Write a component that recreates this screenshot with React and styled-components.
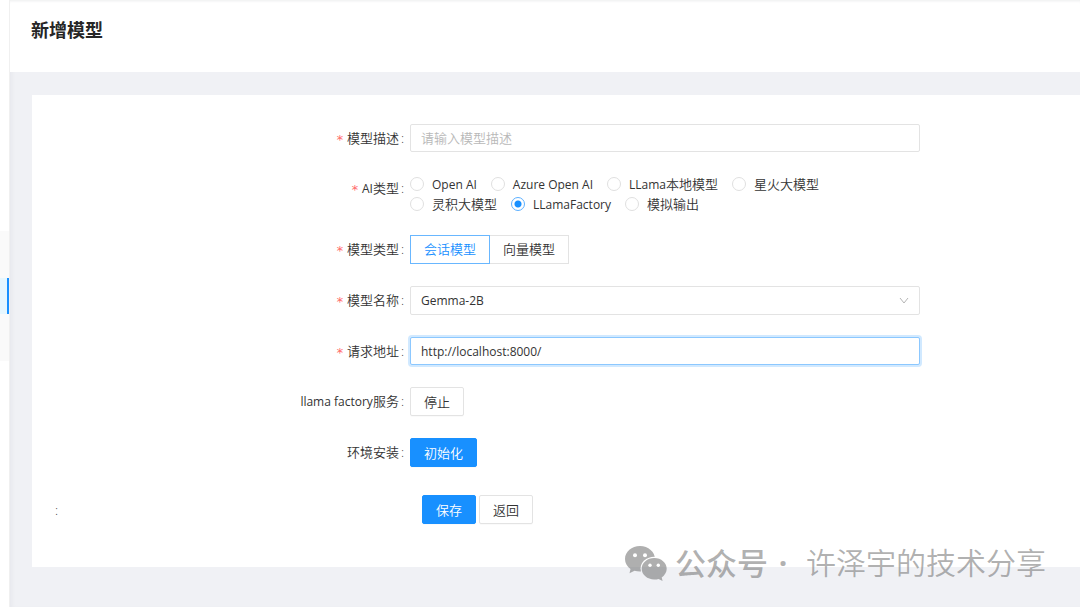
import React, { useState } from 'react'
import styled, { createGlobalStyle, css } from 'styled-components'

const aiTypes = [
  { latin: 'Open AI' },
  { latin: 'Azure Open AI' },
  { latin: 'LLama', text: '本地模型' },
  { text: '星火大模型' },
  { text: '灵积大模型' },
  { latin: 'LLamaFactory' },
  { text: '模拟输出' },
]
const modelTypes = ['会话模型', '向量模型']

const WechatIcon = () => (
  <svg width="42" height="35" viewBox="0 0 42 35" fill="currentColor" aria-hidden="true">
    <mask id="bubbles">
      <rect width="42" height="35" fill="#fff" />
      <ellipse cx="29.3" cy="22.7" rx="13.8" ry="12" fill="#000" />
      <circle cx="10" cy="9.3" r="2" fill="#000" />
      <circle cx="20" cy="9.3" r="2" fill="#000" />
    </mask>
    <mask id="eyes">
      <rect width="42" height="35" fill="#fff" />
      <circle cx="25" cy="19.3" r="1.7" fill="#000" />
      <circle cx="33.3" cy="19.3" r="1.7" fill="#000" />
    </mask>
    <path
      mask="url(#bubbles)"
      d="M15 0C6.700 0 0 5.700 0 13c0 4 2.100 7.500 5.500 10l-1 4.200 5-2.500c1.700.5 3.500.8 5.500.8 8.300 0 15-5.500 15-12.500S23.300 0 15 0z"
    />
    <path
      mask="url(#eyes)"
      d="M29.300 12c-7 0-12.600 4.800-12.600 10.800s5.600 10.700 12.600 10.700c1.500 0 3-.2 4.300-.6l4 2.100-.9-3.600c3-2 5-5.100 5-8.600 0-6-5.500-10.800-12.400-10.800z"
    />
  </svg>
)

const App = () => {
  const [aiType, setAiType] = useState(5)
  const [modelType, setModelType] = useState('会话模型')
  const [desc, setDesc] = useState('')
  const [url, setUrl] = useState('http://localhost:8000/')

  return (
    <>
      <GlobalStyle />
      <Layout>
        <Sider>
          <SubMenu>
            <ActiveItem />
          </SubMenu>
        </Sider>
        <Main>
          <PageHeader>
            <PageTitle>新增模型</PageTitle>
          </PageHeader>
          <Card onSubmit={(e) => e.preventDefault()}>
            <FormItem>
              <Label htmlFor="desc" $required>模型描述</Label>
              <Input id="desc" placeholder="请输入模型描述" value={desc} onChange={(e) => setDesc(e.target.value)} />
            </FormItem>
            <FormItem $tight>
              <Label as="span" id="aiType" $required><Latin>AI</Latin>类型</Label>
              <RadioGroup role="radiogroup" aria-labelledby="aiType">
                {aiTypes.map(({ latin, text }, i) => (
                  <RadioLabel key={i}>
                    <Radio type="radio" name="aiType" checked={aiType === i} onChange={() => setAiType(i)} />
                    <span>{latin && <Latin>{latin}</Latin>}{text}</span>
                  </RadioLabel>
                ))}
              </RadioGroup>
            </FormItem>
            <FormItem>
              <Label as="span" id="modelType" $required>模型类型</Label>
              <ButtonGroup role="radiogroup" aria-labelledby="modelType">
                {modelTypes.map((type) => (
                  <RadioButton key={type}>
                    <HiddenRadio type="radio" name="modelType" checked={modelType === type} onChange={() => setModelType(type)} />
                    {type}
                  </RadioButton>
                ))}
              </ButtonGroup>
            </FormItem>
            <FormItem>
              <Label htmlFor="name" $required>模型名称</Label>
              <SelectWrapper>
                <Select id="name" defaultValue="Gemma-2B">
                  <option>Gemma-2B</option>
                </Select>
                <Arrow viewBox="0 0 10 8" aria-hidden="true">
                  <path d="M1 1l4 5 4-5" fill="none" stroke="currentColor" />
                </Arrow>
              </SelectWrapper>
            </FormItem>
            <FormItem>
              <Label htmlFor="url" $required>请求地址</Label>
              <Input id="url" type="url" $active value={url} onChange={(e) => setUrl(e.target.value)} />
            </FormItem>
            <FormItem>
              <Label as="span"><Latin>llama factory</Latin>服务</Label>
              <Actions>
                <Button type="button">停止</Button>
              </Actions>
            </FormItem>
            <FormItem>
              <Label as="span">环境安装</Label>
              <Actions>
                <Button type="button" $primary>初始化</Button>
              </Actions>
            </FormItem>
            <Footer>
              <Colon>:</Colon>
              <Actions $indent>
                <Button type="submit" $primary>保存</Button>
                <Button type="button">返回</Button>
              </Actions>
            </Footer>
          </Card>
        </Main>
      </Layout>
      <Watermark>
        <WechatIcon />
        <strong>公众号</strong>
        <Dot>·</Dot>
        <span>许泽宇的技术分享</span>
      </Watermark>
    </>
  )
}

export default App

const GlobalStyle = createGlobalStyle`
  * {
    box-sizing: border-box;
  }

  body {
    margin: 0;
    font-family: 'Open Sans', 'Noto Sans CJK SC', sans-serif;
    font-size: 13px;
    font-weight: 350;
    line-height: 20px;
    color: #333;
    background: #f0f2f5;
  }

  input, select, button {
    font: inherit;
    color: inherit;
  }
`
const Layout = styled.div`
  display: flex;
  min-height: 100vh;
`
const Sider = styled.aside`
  flex: none;
  width: 10px;
  padding-top: 231px;
  background: #fff;
  border-right: 1px solid #f0f0f0;
`
const SubMenu = styled.div`
  padding: 47px 0;
  background: #fafafa;
`
const ActiveItem = styled.div`
  height: 36px;
  background: #e6f7ff;
  border-right: 2px solid #1890ff;
`
const Main = styled.main`
  flex: 1;
  min-width: 0;
  background: #f0f1f5;
  box-shadow: inset 4px 0 4px -2px rgba(0, 21, 41, 0.04);
`
const PageHeader = styled.header`
  height: 72px;
  padding: 16px 21px;
  background: #fff;
  box-shadow: inset 0 3px 3px -2px rgba(0, 21, 41, 0.08);
`
const PageTitle = styled.h1`
  margin: 0;
  font-size: 18px;
  line-height: 28px;
  font-weight: 700;
  color: #262626;
`
const Card = styled.form`
  margin: 23px 0 40px 22px;
  padding: 29px 0 43px;
  background: #fff;
`
const FormItem = styled.div`
  display: grid;
  grid-template-columns: 378fr 510fr 160fr;
  align-items: start;
  margin-bottom: ${({ $tight }) => ($tight ? '21px' : '22px')};
`
const Latin = styled.span`
  font-size: 12px;
  font-weight: 400;
`
const Label = styled.label`
  height: 28px;
  padding-right: 6px;
  line-height: 29px;
  text-align: right;

  &::after {
    content: ':';
    margin-left: 2px;
  }

  ${({ $required }) => $required && css`
    &::before {
      content: '*';
      margin-right: 3px;
      font-family: 'DejaVu Sans Mono', monospace;
      line-height: 1;
      vertical-align: middle;
      color: #ff6b6d;
    }
  `}
`
const Input = styled.input`
  width: 100%;
  height: 28px;
  padding: 0 10px;
  font-size: ${({ type }) => (type === 'url' ? '12px' : '13px')};
  font-weight: ${({ type }) => (type === 'url' ? 400 : 350)};
  background: #fff;
  border: 1px solid ${({ $active }) => ($active ? '#8cc8ff' : '#e3e3e3')};
  border-radius: 2px;
  outline: none;
  box-shadow: ${({ $active }) => ($active ? '0 0 0 2px rgba(24, 144, 255, 0.2)' : 'none')};

  &::placeholder {
    color: #b8b8b8;
  }
`
const RadioGroup = styled.div`
  display: flex;
  flex-wrap: wrap;
`
const RadioLabel = styled.label`
  display: flex;
  align-items: center;
  gap: 8px;
  height: 20px;
  margin-right: 14px;
`
const Radio = styled.input`
  appearance: none;
  width: 14px;
  height: 14px;
  margin: 0;
  border: 1px solid #e0e0e0;
  border-radius: 50%;
  background: #fff;

  &:checked {
    border-color: #5cb0ff;
    background: radial-gradient(circle, #1890ff 3px, #fff 4px);
  }
`
const ButtonGroup = styled.div`
  display: flex;
`
const RadioButton = styled.label`
  position: relative;
  height: 29px;
  padding: 0 13px;
  line-height: 27px;
  border: 1px solid #e3e3e3;

  & + & {
    border-left: 0;
  }

  &:has(:checked) {
    color: #1890ff;
    border: 1px solid #69b7ff;
  }
`
const HiddenRadio = styled.input`
  position: absolute;
  opacity: 0;
  width: 0;
  height: 0;
  margin: 0;
`
const SelectWrapper = styled.div`
  position: relative;
`
const Select = styled.select`
  display: block;
  appearance: none;
  width: 100%;
  height: 29px;
  padding: 0 10px;
  font-size: 12px;
  font-weight: 400;
  background: #fff;
  border: 1px solid #e3e3e3;
  border-radius: 2px;
`
const Arrow = styled.svg`
  position: absolute;
  top: 11px;
  right: 11px;
  width: 10px;
  height: 8px;
  color: #b5b5b5;
  pointer-events: none;
`
const Actions = styled.div`
  display: flex;
  gap: 3px;
  padding-left: ${({ $indent }) => ($indent ? '12px' : '0')};
`
const Button = styled.button`
  height: 29px;
  padding: 0 13px;
  background: #fff;
  border: 1px solid #e3e3e3;
  border-radius: 2px;
  box-shadow: 0 1px 0 rgba(0, 0, 0, 0.02);

  ${({ $primary }) => $primary && css`
    color: #fff;
    background: #1890ff;
    border-color: #1890ff;
  `}
`
const Footer = styled(FormItem)`
  align-items: center;
  margin: 28px 0 0;
`
const Colon = styled.span`
  padding-left: 23px;
`
const Watermark = styled.div`
  position: absolute;
  right: 34px;
  bottom: 24px;
  display: flex;
  align-items: center;
  font-size: 30px;
  line-height: 40px;
  color: rgba(110, 110, 110, 0.55);

  svg {
    margin-right: 8px;
  }

  strong {
    font-size: 31px;
    font-weight: 500;
  }
`
const Dot = styled.span`
  width: 38px;
  padding-right: 8px;
  font-weight: 700;
  text-align: center;
`
